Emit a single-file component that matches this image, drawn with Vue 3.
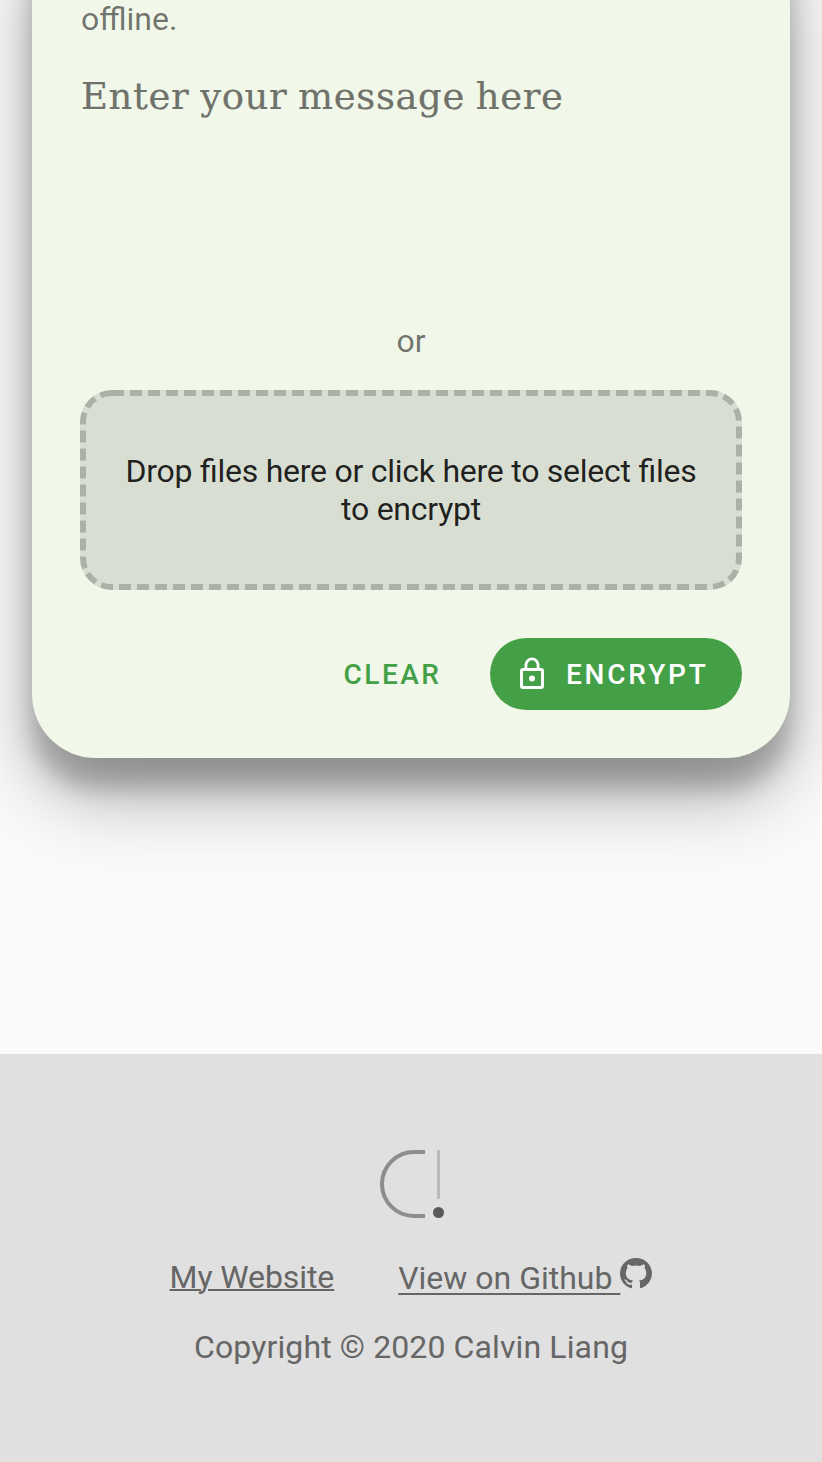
<script setup>
const copyright = 'Copyright © 2020 Calvin Liang'
</script>

<template>
  <div class="page">
    <main class="card">
      <p class="note">offline.</p>
      <div class="message">Enter your message here</div>
      <p class="or">or</p>
      <div class="dropzone">
        <svg class="dashes" width="662" height="200" viewBox="0 0 662 200" aria-hidden="true">
          <rect x="3" y="3" width="656" height="194" rx="29" fill="none" stroke="#000" stroke-opacity="0.2" stroke-width="6" stroke-dasharray="12 6" />
        </svg>
        Drop files here or click here to select files to encrypt
      </div>
      <div class="actions">
        <button class="btn clear">CLEAR</button>
        <button class="btn encrypt">
          <svg width="36" height="36" viewBox="0 0 24 24" aria-hidden="true">
            <path fill="currentColor" d="M12 17a2 2 0 1 0 0-4 2 2 0 0 0 0 4zm6-9h-1V6A5 5 0 0 0 7 6v2H6a2 2 0 0 0-2 2v10a2 2 0 0 0 2 2h12a2 2 0 0 0 2-2V10a2 2 0 0 0-2-2zM8.900 6a3.100 3.100 0 0 1 6.200 0v2H8.900V6zM18 20H6V10h12v10z" />
          </svg>
          <span class="caption">ENCRYPT</span>
        </button>
      </div>
    </main>
    <footer class="footer">
      <svg class="logo" width="64" height="68" viewBox="0 0 64 68" aria-hidden="true">
        <path d="M45 2H34a32 32 0 0 0 0 64h11" fill="none" stroke="#8d8d8d" stroke-width="4" />
        <path d="M58.500 0v49" stroke="#b9b9b9" stroke-width="3" />
        <circle cx="58.500" cy="62.500" r="5.500" fill="#595959" />
      </svg>
      <nav class="links">
        <a class="link site">My Website</a>
        <a class="link github"><span class="label">View on Github </span><svg class="mark" width="32" height="31" viewBox="0 0 16 16" preserveAspectRatio="none" aria-hidden="true"><path fill="currentColor" fill-rule="evenodd" d="M8 0C3.580 0 0 3.580 0 8c0 3.540 2.290 6.530 5.470 7.590.4.070.55-.17.55-.38 0-.19-.01-.82-.01-1.490-2.010.37-2.530-.49-2.690-.94-.09-.23-.48-.94-.82-1.130-.28-.15-.68-.52-.01-.53.63-.01 1.080.58 1.230.82.72 1.210 1.870.87 2.330.66.07-.52.28-.87.51-1.070-1.780-.2-3.640-.89-3.640-3.950 0-.87.31-1.590.82-2.150-.08-.2-.36-1.020.08-2.120 0 0 .67-.21 2.200.82.64-.18 1.320-.27 2-.27s1.360.09 2 .27c1.530-1.040 2.200-.82 2.200-.82.44 1.100.16 1.920.08 2.120.51.56.82 1.270.82 2.150 0 3.070-1.870 3.750-3.650 3.950.29.25.54.73.54 1.480 0 1.070-.01 1.930-.01 2.200 0 .21.15.46.55.38A8.010 8.010 0 0 0 16 8c0-4.420-3.580-8-8-8z" /></svg></a>
      </nav>
      <p class="copyright">{{ copyright }}</p>
    </footer>
  </div>
</template>

<style>
body {
  background: #fafafa;
}
</style>

<style scoped>
.page {
  height: 1462px;
  overflow: hidden;
  display: flex;
  flex-direction: column;
  justify-content: space-between;
  background: #fafafa;
  font-family: Roboto, "Liberation Sans", sans-serif;
  font-size: 32px;
  line-height: 38px;
}
p {
  margin: 0;
}
.card {
  box-sizing: border-box;
  height: 822px;
  margin: -64px 32px 0;
  padding: 64px 48px 48px;
  border-radius: 0 0 64px 64px;
  background: #f1f8e9;
  color: rgba(0, 0, 0, 0.54);
  box-shadow:
    0 38px 76px rgba(0, 0, 0, 0.3),
    0 30px 24px rgba(0, 0, 0, 0.22);
}
.note {
  padding-left: 1px;
}
.message {
  height: 249px;
  margin-top: 35px;
  padding-left: 1px;
  font-family: "DejaVu Serif", serif;
  font-size: 37px;
  line-height: 48px;
  letter-spacing: 0.6px;
  word-spacing: -1.5px;
  color: #6f726b;
  -webkit-text-stroke: 0.2px #6f726b;
  white-space: nowrap;
}
.or {
  text-align: center;
}
.dropzone {
  position: relative;
  box-sizing: border-box;
  height: 200px;
  margin-top: 30px;
  padding: 62px 38px;
  border-radius: 32px;
  background: rgba(0, 0, 0, 0.1);
  color: rgba(0, 0, 0, 0.87);
  text-align: center;
  letter-spacing: -0.25px;
  font-feature-settings: "liga" 1;
}
.dashes {
  position: absolute;
  inset: 0;
}
.actions {
  display: flex;
  justify-content: flex-end;
  gap: 16px;
  margin-top: 48px;
}
.btn {
  display: flex;
  align-items: center;
  height: 72px;
  border: 0;
  border-radius: 36px;
  font: 500 28px/36px Roboto, "Liberation Sans", sans-serif;
  letter-spacing: 2.500px;
}
.clear {
  padding: 2px 32.500px 0 32px;
  background: none;
  color: #43a047;
}
.encrypt {
  width: 252px;
  padding: 0 0 0 24px;
  gap: 16px;
  background: #43a047;
  color: #fff;
}
.caption {
  padding-top: 2px;
  letter-spacing: 2.8px;
}
.footer {
  box-sizing: border-box;
  height: 408px;
  padding-top: 96px;
  display: flex;
  flex-direction: column;
  align-items: center;
  background: #e0e0e0;
  color: #666;
}
.logo {
  margin-left: 2px;
}
.links {
  display: flex;
  gap: 64px;
  margin-top: 40px;
  height: 40px;
}
.site {
  text-decoration: underline;
  text-decoration-thickness: 2px;
  letter-spacing: -0.1px;
}
.github {
  display: flex;
  padding-top: 1px;
}
.label {
  white-space: pre;
  text-decoration: underline;
  text-decoration-thickness: 2px;
  text-underline-offset: 4px;
}
.mark {
  margin-top: -1px;
}
.copyright {
  margin-top: 30px;
  letter-spacing: 0.12px;
}
</style>
